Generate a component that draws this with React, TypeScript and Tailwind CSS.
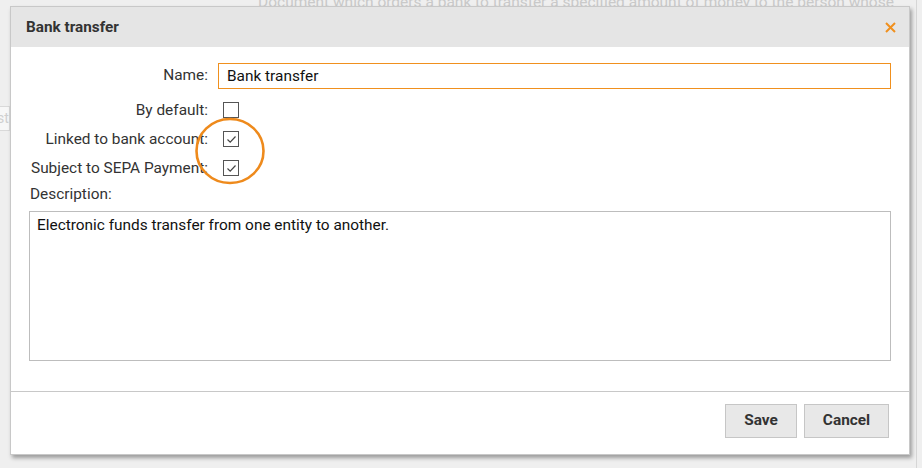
export default function App() {
  return (
    <div
      className="relative h-[468px] w-[922px] overflow-hidden bg-[#efefef] text-[#333]"
      style={{ fontFamily: "Roboto, 'Liberation Sans', sans-serif" }}
    >
      {/* page behind the dialog */}
      <div className="absolute left-[258px] top-[-9px] whitespace-nowrap text-[15.5px] text-[#c9c9c9]">
        Document which orders a bank to transfer a specified amount of money to the person whose
      </div>
      <div className="absolute left-[-40px] top-[106px] h-[25px] w-[50px] border border-[#d9d9d9] bg-[#f7f7f7] pl-[36px] text-[14px] leading-[23px] text-[#cfcfcf]">
        st
      </div>
      <div className="absolute right-[5px] top-0 h-full border-l border-[#d6d6d6]" />

      {/* dialog */}
      <div className="absolute left-[10px] top-[6px] flex w-[900px] flex-col border border-[#c8c8c8] bg-white shadow-[2px_3px_4px_rgba(0,0,0,0.35)]">
        <div className="flex h-[40px] items-center justify-between bg-[#e5e5e5] pl-[15px] pr-[13px]">
          <span className="text-[15.3px] font-bold text-[#333]">Bank transfer</span>
          <svg width="11" height="11" viewBox="0 0 11 11">
            <path d="M1 1 L10 10 M10 1 L1 10" stroke="#f0901e" strokeWidth="2" />
          </svg>
        </div>

        <div className="flex flex-col px-[18px] pt-[16px] pb-[30px] text-[15.4px]">
          <div className="grid grid-cols-[179px_1fr] items-center gap-x-[10px]">
            <label className="text-right">Name:</label>
            <div className="h-[26px] border border-[#f0901e] px-[8px] text-[15.4px] leading-[24px] text-[#111]">
              Bank transfer
            </div>
          </div>

          <div className="mt-[8px] grid grid-cols-[179px_1fr] items-center gap-x-[10px]">
            <label className="text-right leading-[26px]">By default:</label>
            <span className="ml-[5px] h-[16px] w-[16px] border border-[#555] bg-white" />
          </div>

          <div className="relative mt-[3px] grid grid-cols-[179px_1fr] items-center gap-x-[10px]">
            <label className="text-right leading-[26px]">Linked to bank account:</label>
            <Check />
          </div>

          <div className="mt-[3px] grid grid-cols-[179px_1fr] items-center gap-x-[10px]">
            <label className="text-right leading-[26px]">Subject to SEPA Payment:</label>
            <Check />
          </div>

          <label className="ml-[1px] mt-[1px] leading-[24px]">Description:</label>
          <div className="mt-[5px] h-[150px] border border-[#bdbdbd] px-[7px] pt-[2px] text-[15.4px] text-[#111]">
            Electronic funds transfer from one entity to another.
          </div>
        </div>

        <div className="flex justify-end gap-[7px] border-t border-[#c8c8c8] pb-[16px] pl-4 pr-[20px] pt-[12px]">
          <button className="h-[34px] w-[72px] border border-[#c6c6c6] bg-[#e8e8e8] text-[15.4px] font-bold text-[#333]">
            Save
          </button>
          <button className="h-[34px] w-[85px] border border-[#c6c6c6] bg-[#e8e8e8] text-[15.4px] font-bold text-[#333]">
            Cancel
          </button>
        </div>
      </div>

      {/* highlight circle */}
      <svg className="absolute left-[193px] top-[116px]" width="74" height="70" viewBox="0 0 74 70">
        <ellipse cx="37" cy="35" rx="33.5" ry="32" fill="none" stroke="#ee8a1c" strokeWidth="2.6" />
      </svg>
    </div>
  );
}

function Check() {
  return (
    <span className="ml-[5px] flex h-[16px] w-[16px] items-center justify-center border border-[#555] bg-white">
      <svg width="11" height="9" viewBox="0 0 11 9">
        <path d="M1.5 4.5 L4.2 7.2 L9.5 1.5" fill="none" stroke="#444" strokeWidth="1.2" />
      </svg>
    </span>
  );
}
